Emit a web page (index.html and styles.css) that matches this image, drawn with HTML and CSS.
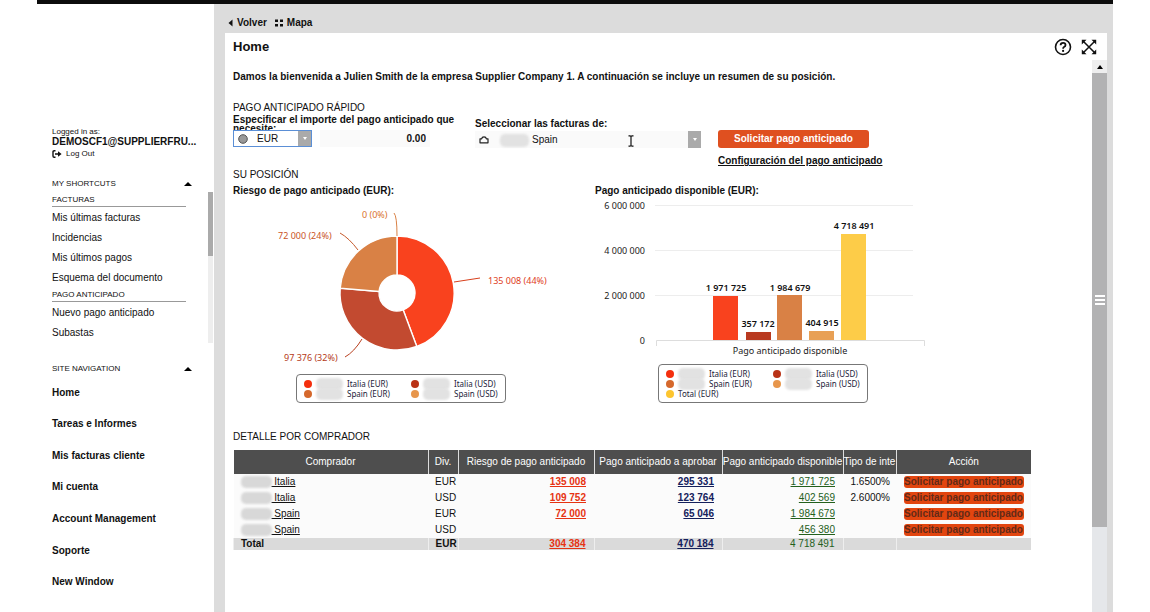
FILE: index.html
```html
<!DOCTYPE html>
<html lang="es">
<head>
<meta charset="utf-8">
<title>Home</title>
<link rel="stylesheet" href="styles.css">
</head>
<body>
<div class="app">
  <aside class="sidebar">
    <div class="account">
      <p class="tiny">Logged in as:</p>
      <p class="user">DEMOSCF1@SUPPLIERFRU...</p>
      <a class="logout" href="#"><svg width="10" height="8" viewBox="0 0 10 8"><path d="M3.500 .8H2.200Q1 .8 1 2V6Q1 7.200 2.200 7.200H3.500M3 4H7" fill="none" stroke="#111" stroke-width="1.400"/><path d="M6 1.200L9.600 4L6 6.800Z" fill="#111"/></svg>Log Out</a>
    </div>
    <section class="shortcuts">
      <div class="shortcut-list">
        <button class="group" type="button">MY SHORTCUTS<span class="caret"></span></button>
        <h3 class="subgroup">FACTURAS</h3>
        <a href="#">Mis últimas facturas</a>
        <a href="#">Incidencias</a>
        <a href="#">Mis últimos pagos</a>
        <a href="#">Esquema del documento</a>
        <h3 class="subgroup second">PAGO ANTICIPADO</h3>
        <a href="#">Nuevo pago anticipado</a>
        <a href="#">Subastas</a>
      </div>
      <div class="mini-scroll"><div class="mini-thumb"></div></div>
    </section>
    <button class="group site" type="button">SITE NAVIGATION<span class="caret"></span></button>
    <nav class="site-nav">
      <a href="#">Home</a>
      <a href="#">Tareas e Informes</a>
      <a href="#">Mis facturas cliente</a>
      <a href="#">Mi cuenta</a>
      <a href="#">Account Management</a>
      <a href="#">Soporte</a>
      <a href="#">New Window</a>
    </nav>
  </aside>
  <main class="main">
    <div class="toolbar">
      <a href="#"><svg width="5" height="8" viewBox="0 0 5 8"><path d="M4.500 .5V7.500L.5 4Z" fill="#111"/></svg>Volver</a>
      <a href="#"><svg width="8" height="8" viewBox="0 0 8 8"><path d="M0 .5h3v2.600H0zM5 .5h3v2.600H5zM0 5h3v2.600H0zM5 5h3v2.600H5z" fill="#111"/></svg>Mapa</a>
    </div>
    <div class="panel">
      <header class="panel-head">
        <h1>Home</h1>
        <button type="button" aria-label="Ayuda"><svg width="18" height="18" viewBox="0 0 18 18"><circle cx="9" cy="9" r="7.500" fill="none" stroke="#111" stroke-width="1.600"/><path d="M6.600 7.200Q6.600 4.800 9.100 4.800Q11.500 4.800 11.500 6.900Q11.500 8.200 10 9Q9.100 9.500 9.100 10.800" fill="none" stroke="#111" stroke-width="1.800"/><circle cx="9.100" cy="12.900" r="1.100" fill="#111"/></svg></button>
        <button type="button" aria-label="Ampliar"><svg width="16" height="16" viewBox="0 0 16 16"><path d="M2 2L14 14M14 2L2 14" stroke="#111" stroke-width="1.500"/><path d="M.8 5.500V.8H5.500ZM10.500 .8H15.200V5.500ZM15.200 10.500V15.200H10.500ZM5.500 15.200H.8V10.500Z" fill="#111"/></svg></button>
      </header>
      <div class="panel-body">
        <div class="content">
          <p class="intro">Damos la bienvenida a Julien Smith de la empresa Supplier Company 1. A continuación se incluye un resumen de su posición.</p>
          <h2>PAGO ANTICIPADO RÁPIDO</h2>
          <form class="quick">
            <div class="field amount">
              <label for="amount">Especificar el importe del pago anticipado que necesite:</label>
              <div class="controls">
                <div class="select currency">
                  <select aria-label="Divisa"><option>EUR</option></select>
                  <svg class="lead" width="10" height="10" viewBox="0 0 10 10"><circle cx="5" cy="5" r="4.300" fill="#999" stroke="#555"/></svg>
                  <span class="drop"></span>
                </div>
                <input id="amount" type="text" value="0.00">
              </div>
            </div>
            <div class="field buyer">
              <label for="buyer">Seleccionar las facturas de:</label>
              <div class="select">
                <select id="buyer"><option>Spain</option></select>
                <svg class="lead" width="10" height="8" viewBox="0 0 10 8"><path d="M1 2.800H2.600Q3 .8 5 .8T7.400 2.800H9V6.800H1Z" fill="none" stroke="#222" stroke-width="1.200" stroke-linejoin="round"/></svg>
                <span class="smudge name"></span>
                <svg class="ibeam" width="6" height="12" viewBox="0 0 6 12"><path d="M.5 .8H2L3 1.500L4 .8H5.500M3 1.500V10.500M.5 11.200H2L3 10.500L4 11.200H5.500" fill="none" stroke="#111" stroke-width="1.200"/></svg>
                <span class="drop"></span>
              </div>
            </div>
            <div class="actions">
              <button class="primary" type="button">Solicitar pago anticipado</button>
              <a href="#">Configuración del pago anticipado</a>
            </div>
          </form>
          <h2>SU POSICIÓN</h2>
          <div class="charts">
            <section>
              <h3>Riesgo de pago anticipado (EUR):</h3>
              <svg class="chart" width="340" height="174" viewBox="0 0 340 174">
                <g stroke="#fff" stroke-width="1.400" transform="translate(164 93)">
                  <path d="M0 -57A57 57 0 0 1 19.800 53.500L6.200 16.900A18 18 0 0 0 0 -18Z" fill="#f9421e"/>
                  <path d="M19.800 53.500A57 57 0 0 1 -56.800 -4.800L-17.900 -1.500A18 18 0 0 0 6.200 16.900Z" fill="#c24a30"/>
                  <path d="M-56.800 -4.800A57 57 0 0 1 0 -57V-18A18 18 0 0 0 -17.900 -1.500Z" fill="#d98145"/>
                </g>
                <g fill="none" stroke-width="1">
                  <path d="M161 13Q164 16 164 36" stroke="#d98145"/>
                  <path d="M107 33Q116 38 125 50" stroke="#c65a2c"/>
                  <path d="M221 82L247 78" stroke="#d8401c"/>
                  <path d="M112 157Q121 152 129 139" stroke="#b8401f"/>
                </g>
                <g>
                  <text x="129" y="18" fill="#d9722f">0 (0%)</text>
                  <text x="45" y="39" fill="#c9541f">72 000 (24%)</text>
                  <text x="255" y="84" fill="#e0401c">135 008 (44%)</text>
                  <text x="51" y="161" fill="#b53a18">97 376 (32%)</text>
                </g>
              </svg>
              <ul class="legend">
                <li><i class="dot red"></i><span class="smudge"></span>Italia (EUR)</li>
                <li><i class="dot brick"></i><span class="smudge"></span>Italia (USD)</li>
                <li><i class="dot orange"></i><span class="smudge"></span>Spain (EUR)</li>
                <li><i class="dot sand"></i><span class="smudge"></span>Spain (USD)</li>
              </ul>
            </section>
            <section>
              <h3>Pago anticipado disponible (EUR):</h3>
              <svg class="chart" width="340" height="164" viewBox="0 0 340 164">
                <path d="M60 5.500H318M60 50.500H318M60 95.500H318" stroke="#ededed"/>
                <path d="M61.500 146V140.500H329.500V146" fill="none" stroke="#ddd"/>
                <rect x="118" y="96" width="25" height="44" fill="#f9421e"/>
                <rect x="151" y="132" width="25" height="8" fill="#b93a20"/>
                <rect x="182" y="95" width="25" height="45" fill="#d98145"/>
                <rect x="214" y="131" width="25" height="9" fill="#e8a055"/>
                <rect x="246" y="34" width="25" height="106" fill="#fdcc48"/>
                <g class="axis" text-anchor="end">
                  <text x="50" y="9">6 000 000</text>
                  <text x="50" y="54">4 000 000</text>
                  <text x="50" y="99">2 000 000</text>
                  <text x="50" y="144">0</text>
                </g>
                <text class="axis" x="195" y="154" text-anchor="middle">Pago anticipado disponible</text>
                <g class="values" text-anchor="middle">
                  <text x="131" y="91">1 971 725</text>
                  <text x="163" y="127">357 172</text>
                  <text x="195" y="91">1 984 679</text>
                  <text x="227" y="126">404 915</text>
                  <text x="259" y="29">4 718 491</text>
                </g>
              </svg>
              <ul class="legend">
                <li><i class="dot red"></i><span class="smudge"></span>Italia (EUR)</li>
                <li><i class="dot brick"></i><span class="smudge"></span>Italia (USD)</li>
                <li><i class="dot orange"></i><span class="smudge"></span>Spain (EUR)</li>
                <li><i class="dot sand"></i><span class="smudge"></span>Spain (USD)</li>
                <li><i class="dot yellow"></i>Total (EUR)</li>
              </ul>
            </section>
          </div>
          <h2 class="detail-title">DETALLE POR COMPRADOR</h2>
          <table>
            <colgroup><col><col class="c-div"><col class="c-risk"><col class="c-approve"><col class="c-avail"><col class="c-rate"><col class="c-action"></colgroup>
            <thead>
              <tr><th>Comprador</th><th>Div.</th><th>Riesgo de pago anticipado</th><th>Pago anticipado a aprobar</th><th>Pago anticipado disponible</th><th>Tipo de inte</th><th>Acción</th></tr>
            </thead>
            <tbody>
              <tr><td class="who"><span class="smudge"></span><a href="#">&nbsp;Italia</a></td><td class="div">EUR</td><td class="risk"><a href="#">135 008</a></td><td class="approve"><a href="#">295 331</a></td><td class="avail"><a href="#">1 971 725</a></td><td class="rate">1.6500%</td><td class="act"><button type="button">Solicitar pago anticipado</button></td></tr>
              <tr><td class="who"><span class="smudge"></span><a href="#">&nbsp;Italia</a></td><td class="div">USD</td><td class="risk"><a href="#">109 752</a></td><td class="approve"><a href="#">123 764</a></td><td class="avail"><a href="#">402 569</a></td><td class="rate">2.6000%</td><td class="act"><button type="button">Solicitar pago anticipado</button></td></tr>
              <tr><td class="who"><span class="smudge"></span><a href="#">&nbsp;Spain</a></td><td class="div">EUR</td><td class="risk"><a href="#">72 000</a></td><td class="approve"><a href="#">65 046</a></td><td class="avail"><a href="#">1 984 679</a></td><td></td><td class="act"><button type="button">Solicitar pago anticipado</button></td></tr>
              <tr><td class="who"><span class="smudge"></span><a href="#">&nbsp;Spain</a></td><td class="div">USD</td><td></td><td></td><td class="avail"><a href="#">456 380</a></td><td></td><td class="act"><button type="button">Solicitar pago anticipado</button></td></tr>
            </tbody>
            <tfoot>
              <tr><td class="who">Total</td><td class="div">EUR</td><td class="risk"><a href="#">304 384</a></td><td class="approve"><a href="#">470 184</a></td><td class="avail">4 718 491</td><td></td><td></td></tr>
            </tfoot>
          </table>
        </div>
        <div class="scroll">
          <div class="scroll-up"><span class="caret"></span></div>
          <div class="scroll-thumb"><i></i><i></i><i></i></div>
        </div>
      </div>
    </div>
  </main>
</div>
</body>
</html>
```

FILE: styles.css
```css
* { box-sizing: border-box; }
body, h1, h2, h3, p, ul { margin: 0; padding: 0; }
body {
  background: #fff;
  color: #111;
  font: 10px/14px "Liberation Sans", Arial, sans-serif;
}
a { color: inherit; text-decoration: none; }
button, input, select { font: inherit; color: inherit; border: 0; padding: 0; margin: 0; background: none; }
svg { display: block; flex: none; }

.app {
  display: grid;
  grid-template-columns: 177px 1fr;
  min-height: 100vh;
  margin: 0 37px;
  border-top: 4px solid #0c0c0c;
}

/* Sidebar */
.sidebar { padding: 123px 0 0 15px; }
.account { line-height: 10px; }
.tiny { font-size: 8px; }
.user { font-weight: bold; }
.logout { display: flex; align-items: center; gap: 4px; padding-top: 2px; line-height: 10px; font-size: 8px; }
.shortcuts { display: flex; justify-content: space-between; margin-top: 19px; }
.shortcut-list { flex: 1; }
.shortcut-list a { display: block; line-height: 20px; }
.group { display: flex; align-items: center; width: 140px; line-height: 12px; font-size: 8px; }
.caret { margin-left: auto; border: 4px solid transparent; border-top: 0; border-bottom: 4px solid #000; }
.subgroup { width: 134px; margin: 3px 0 1px; border-bottom: 1px solid #999; font: 8px/13px "Liberation Sans", Arial, sans-serif; }
.subgroup.second { margin-top: 0; }
.mini-scroll { width: 5px; margin: 14px 1px 0 0; background: #eee; }
.mini-thumb { height: 64px; background: #aaa; }
.group.site { margin-top: 20px; }
.site-nav { display: grid; grid-auto-rows: 1fr; align-items: center; height: 221px; margin-top: 2px; font-weight: bold; }

/* Main area */
.main { display: flex; flex-direction: column; padding: 0 6px 0 11px; background: #dcdcdc; }
.toolbar { display: flex; align-items: flex-start; gap: 8px; height: 29px; padding: 12px 3px 0; font-weight: bold; }
.toolbar a { display: flex; align-items: center; gap: 4px; }
.panel { flex: 1; display: flex; flex-direction: column; background: #fff; }
.panel-head { display: flex; align-items: center; gap: 9px; height: 27px; padding: 0 10px 0 8px; }
.panel-head h1 { margin-right: auto; font-size: 13px; }
.panel-body { flex: 1; display: grid; grid-template-columns: 1fr 15px; }
.content { padding: 10px 61px 20px 8px; }
h2 { font-size: 10px; font-weight: normal; line-height: 14px; }
h3 { font-size: 10px; line-height: 14px; }
.intro { margin-bottom: 17px; font-weight: bold; white-space: nowrap; }

/* Quick payment form */
.quick { display: grid; grid-template-columns: 242px 243px 1fr; align-items: start; }
.field label { display: block; font-weight: bold; }
.amount label { width: 230px; line-height: 9px; }
.controls { display: flex; gap: 8px; position: relative; margin-top: -3px; }
.controls input { width: 110px; height: 17px; padding-right: 4px; background: #fafafa; font-weight: bold; text-align: right; }
.select { position: relative; width: 226px; height: 17px; background: #fafafa; }
.select select { appearance: none; width: 100%; height: 100%; padding-left: 57px; }
.currency { width: 79px; border: 1px solid #5b8fd6; background: #fff; }
.currency select { padding-left: 23px; }
.lead { position: absolute; left: 4px; top: 3px; }
.buyer .lead { top: 5px; }
.drop { position: absolute; right: 0; top: 0; bottom: 0; display: grid; place-items: center; width: 13px; background: #aaa; pointer-events: none; }
.drop::before { content: ""; border: 2px solid transparent; border-top: 3px solid #fff; border-bottom: 0; }
.ibeam { position: absolute; left: 153px; top: 4px; }
.buyer { padding-top: 2px; }
.actions { display: flex; flex-direction: column; align-items: flex-start; gap: 6px; padding-top: 15px; font-weight: bold; }
.actions a { text-decoration: underline; }
.primary { width: 151px; height: 18px; border-radius: 3px; background: #df5020; color: #fff; font-weight: bold; }

/* Redacted names */
.smudge { display: block; width: 28px; height: 13px; border-radius: 5px; background: #e2e2e2; filter: blur(1px); }
.smudge.name { position: absolute; left: 25px; top: 3px; width: 29px; height: 13px; }

/* Charts */
.charts { display: grid; grid-template-columns: 362px 1fr; margin-top: 2px; }
.chart { margin-top: 2px; overflow: visible; font-family: "Noto Sans", sans-serif; font-size: 9px; }
.axis { fill: #222; }
.values { fill: #111; font-weight: 600; }
.legend { display: grid; grid-template-columns: 107px 1fr; width: 210px; margin-left: 63px; padding: 4px 0 3px 7px; border: 1px solid #777; border-radius: 4px; color: #1b1b38; font: 8px/10px "Noto Sans", sans-serif; list-style: none; }
.legend li { display: flex; align-items: center; height: 10px; gap: 4px; }
.legend .smudge { width: 27px; height: 12px; }
.dot { width: 8px; height: 8px; border-radius: 50%; }
.red { background: #f42f0e; }
.brick { background: #b93216; }
.orange { background: #d5682c; }
.sand { background: #e7964c; }
.yellow { background: #fdc52f; }

/* Detail table */
.detail-title { margin: 27px 0 6px; }
table { width: 100%; table-layout: fixed; border-collapse: collapse; line-height: 12px; }
.c-div { width: 30px; }
.c-risk { width: 136px; }
.c-approve { width: 128px; }
.c-avail { width: 121px; }
.c-rate { width: 53px; }
.c-action { width: 135px; }
th { height: 24px; padding: 0; border-left: 1px solid #ddd; background: #4e4e4e; color: #fff; font-weight: normal; white-space: nowrap; }
th:first-child { border-left: 0; }
tbody td { height: 16px; padding: 0; background: #fbfbfb; }
tfoot td { height: 12px; padding: 0; border-left: 1px solid #eee; background: #dadada; font-weight: bold; }
tbody a, tfoot a { text-decoration: underline; }
td.who { padding-left: 7px; }
.who .smudge { display: inline-block; width: 31px; height: 12px; vertical-align: middle; background: #d8d8d8; }
td.div { padding-left: 7px; }
td.risk, td.approve, td.avail { padding-right: 8px; text-align: right; font-weight: bold; }
td.risk { color: #e63312; }
td.approve { color: #14205c; }
td.avail { color: #23601c; font-weight: normal; }
td.rate { padding-right: 6px; text-align: right; }
td.act { text-align: center; line-height: 0; }
.act button { width: 120px; height: 12px; border-radius: 3px; background: #e2450f; color: #622a18; font-weight: bold; line-height: 12px; }

/* Panel scrollbar */
.scroll { display: flex; flex-direction: column; background: #e5e7ea; }
.scroll-up { display: grid; place-items: center; height: 13px; background: #eee; }
.scroll-up .caret { margin: 0; border-width: 0 3px 4px; }
.scroll-thumb { flex: 0 1 454px; display: flex; flex-direction: column; align-items: center; justify-content: center; gap: 2px; background: #b2b2b3; }
.scroll-thumb i { width: 10px; height: 2px; background: #fff; }
```
